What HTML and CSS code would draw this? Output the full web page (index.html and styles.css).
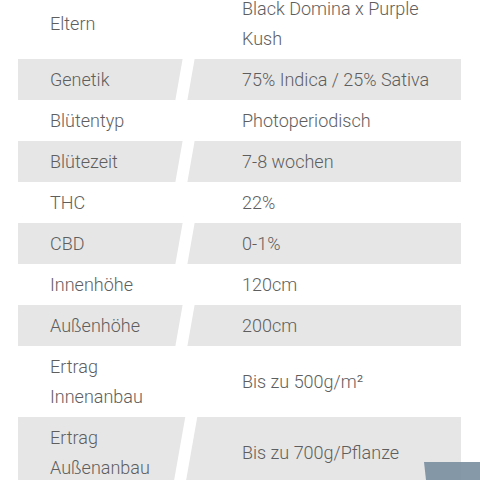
FILE: index.html
```html
<!DOCTYPE html>
<html lang="de">
<head>
<meta charset="utf-8">
<title>Sorteninfo</title>
<link rel="stylesheet" href="styles.css">
</head>
<body>
<div class="specs">
  <div class="row"><div class="label">Eltern</div><div class="value">Black Domina x Purple Kush</div></div>
  <div class="row alt"><div class="label">Genetik</div><div class="value">75% Indica / 25% Sativa</div></div>
  <div class="row"><div class="label">Blütentyp</div><div class="value">Photoperiodisch</div></div>
  <div class="row alt"><div class="label">Blütezeit</div><div class="value">7-8 wochen</div></div>
  <div class="row"><div class="label">THC</div><div class="value">22%</div></div>
  <div class="row alt"><div class="label">CBD</div><div class="value">0-1%</div></div>
  <div class="row"><div class="label">Innenhöhe</div><div class="value">120cm</div></div>
  <div class="row alt"><div class="label">Außenhöhe</div><div class="value">200cm</div></div>
  <div class="row"><div class="label">Ertrag Innenanbau</div><div class="value">Bis zu 500g/m²</div></div>
  <div class="row alt"><div class="label">Ertrag Außenanbau</div><div class="value">Bis zu 700g/Pflanze</div></div>
</div>
<div class="corner"></div>
</body>
</html>
```
FILE: styles.css
```css
html, body {
  margin: 0;
  padding: 0;
  background: #ffffff;
  overflow: hidden;
}
body {
  font-family: Roboto, "Liberation Sans", sans-serif;
  font-weight: 300;
  font-size: 18px;
  line-height: 30px;
  color: #5e5e5e;
}
.specs {
  margin: -12px 0 0 18px;
  width: 443px;
}
.row {
  display: grid;
  grid-template-columns: 167px 1fr;
  align-items: center;
}
.row.alt {
  background: #e6e6e6;
}
.label {
  position: relative;
  align-self: stretch;
  display: flex;
  align-items: center;
  padding: 5.5px 0 5.5px 32px;
  width: 135px;
}
.row.alt .label::after {
  content: "";
  position: absolute;
  top: 0;
  bottom: 0;
  right: -6px;
  width: 12px;
  background: #ffffff;
  transform: skewX(-10deg);
}
.value {
  padding: 5.5px 30px 5.5px 57px;
}
.corner {
  position: fixed;
  right: 0;
  bottom: 0;
  width: 56px;
  height: 18px;
  background: rgba(120, 142, 158, 0.9);
  clip-path: polygon(0 0, 100% 0, 100% 100%, 2px 100%);
}
```
